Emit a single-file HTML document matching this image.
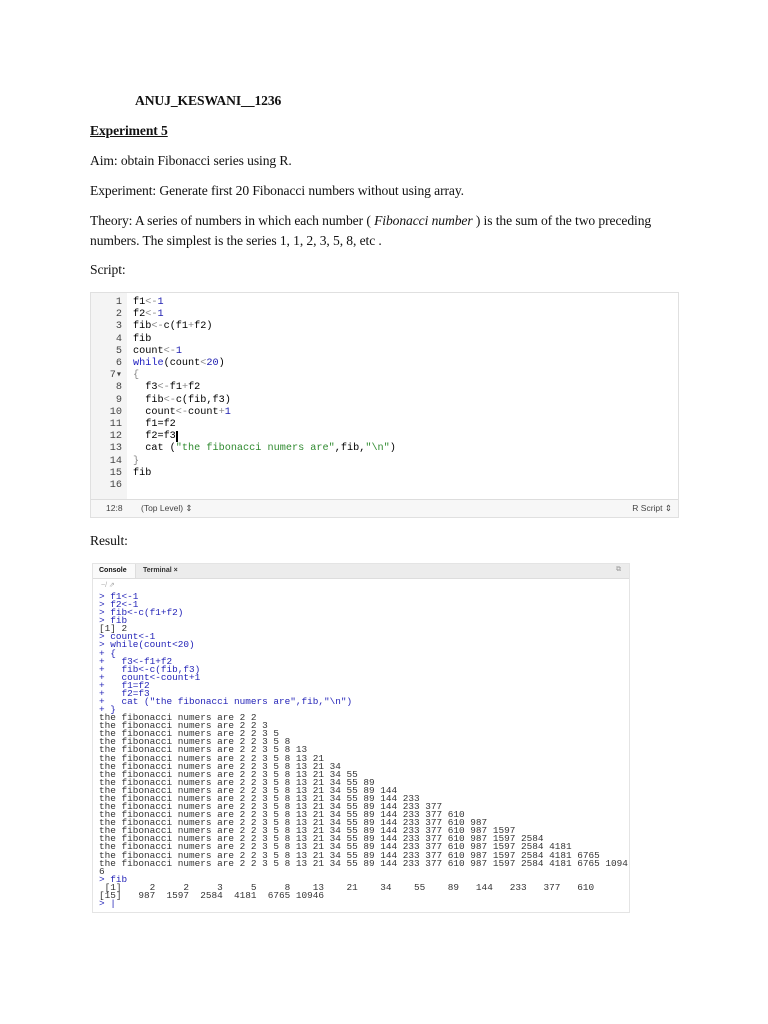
<!DOCTYPE html>
<html><head><meta charset="utf-8"><style>
body{margin:0;background:#fff;width:768px;height:1024px;position:relative;overflow:hidden;font-family:"Liberation Serif",serif;color:#111}
.t{position:absolute;font-size:13.6px;white-space:nowrap;letter-spacing:-0.1px}
.ed{position:absolute;left:90px;top:292px;width:589px;height:226px;background:#fff;border:1px solid #e0e0e0;box-sizing:border-box}
.gut{position:absolute;left:0;top:0;width:36px;height:208px;background:#f4f4f4}
.code{position:absolute;font-family:"Liberation Mono",monospace;font-size:10.2px;line-height:12.2px;white-space:pre}
.ln{left:0;width:31px;text-align:right;color:#444;top:4px}
.src{left:42px;top:4px;color:#000}
.b{color:#2020b0}.g{color:#2f8a2f}.k{color:#2020c0}.p{color:#888}
.sb{position:absolute;left:0;bottom:0;width:100%;height:17px;border-top:1px solid #ddd;background:#f7f7f7;font-family:"Liberation Sans",sans-serif;font-size:8.5px;color:#444}
.con{position:absolute;left:92px;top:563px;width:538px;height:350px;border:1px solid #e4e4e4;box-sizing:border-box;background:#fff}
.tabs{height:14px;background:#ececec;border-bottom:1px solid #ddd;font-family:"Liberation Sans",sans-serif;font-size:7px;position:relative}
.cout{position:absolute;left:6px;top:29px;font-family:"Liberation Mono",monospace;font-size:9.4px;line-height:8.08px;white-space:pre;color:#333}
.i{color:#2424b8}
</style></head><body>
<div class="t" style="left:135px;top:93px;font-weight:bold">ANUJ_KESWANI__1236</div>
<div class="t" style="left:90px;top:123px;font-weight:bold;text-decoration:underline">Experiment 5</div>
<div class="t" style="left:90px;top:153px">Aim: obtain Fibonacci series using R.</div>
<div class="t" style="left:90px;top:183px">Experiment: Generate first 20 Fibonacci numbers without using array.</div>
<div class="t" style="left:90px;top:213px">Theory: A series of numbers in which each number ( <i>Fibonacci number</i> ) is the sum of the two preceding</div>
<div class="t" style="left:90px;top:233px">numbers. The simplest is the series 1, 1, 2, 3, 5, 8, etc .</div>
<div class="t" style="left:90px;top:262px">Script:</div>
<div class="t" style="left:90px;top:533px">Result:</div>

<div class="ed">
<div class="gut"></div>
<div class="code ln">1
2
3
4
5
6
7▾
8
9
10
11
12
13
14
15
16</div>
<div class="code src">f1<span class="p">&lt;-</span><span class="b">1</span>
f2<span class="p">&lt;-</span><span class="b">1</span>
fib<span class="p">&lt;-</span>c(f1<span class="p">+</span>f2)
fib
count<span class="p">&lt;-</span><span class="b">1</span>
<span class="k">while</span>(count<span class="p">&lt;</span><span class="b">20</span>)
<span class="p">{</span>
  f3<span class="p">&lt;-</span>f1<span class="p">+</span>f2
  fib<span class="p">&lt;-</span>c(fib,f3)
  count<span class="p">&lt;-</span>count<span class="p">+</span><span class="b">1</span>
  f1=f2
  f2=f3<span style="border-left:2px solid #000"></span>
  cat (<span class="g">"the fibonacci numers are"</span>,fib,<span class="g">"\n"</span>)
<span class="p">}</span>
fib
</div>
<div class="sb"><span style="position:absolute;left:15px;top:3px">12:8</span><span style="position:absolute;left:50px;top:3px">(Top Level) ⇕</span><span style="position:absolute;right:6px;top:3px">R Script ⇕</span></div>
</div>

<div class="con">
<div class="tabs"><span style="position:absolute;left:0;top:0;height:14px;width:42px;background:#fafafa;border-right:1px solid #ddd"></span><span style="position:absolute;left:6px;top:3px;font-weight:bold">Console</span><span style="position:absolute;left:50px;top:3px;font-weight:bold;color:#333">Terminal ×</span><span style="position:absolute;right:8px;top:2px;color:#999">⧉</span></div>
<div style="position:absolute;left:8px;top:17px;font-size:7px;color:#aaa;font-family:'Liberation Sans',sans-serif">~/ ⇗</div>
<div class="cout"><span class="i">&gt; f1&lt;-1
&gt; f2&lt;-1
&gt; fib&lt;-c(f1+f2)
&gt; fib</span>
[1] 2
<span class="i">&gt; count&lt;-1
&gt; while(count&lt;20)
+ {
+   f3&lt;-f1+f2
+   fib&lt;-c(fib,f3)
+   count&lt;-count+1
+   f1=f2
+   f2=f3
+   cat ("the fibonacci numers are",fib,"\n")
+ }</span>
the fibonacci numers are 2 2
the fibonacci numers are 2 2 3
the fibonacci numers are 2 2 3 5
the fibonacci numers are 2 2 3 5 8
the fibonacci numers are 2 2 3 5 8 13
the fibonacci numers are 2 2 3 5 8 13 21
the fibonacci numers are 2 2 3 5 8 13 21 34
the fibonacci numers are 2 2 3 5 8 13 21 34 55
the fibonacci numers are 2 2 3 5 8 13 21 34 55 89
the fibonacci numers are 2 2 3 5 8 13 21 34 55 89 144
the fibonacci numers are 2 2 3 5 8 13 21 34 55 89 144 233
the fibonacci numers are 2 2 3 5 8 13 21 34 55 89 144 233 377
the fibonacci numers are 2 2 3 5 8 13 21 34 55 89 144 233 377 610
the fibonacci numers are 2 2 3 5 8 13 21 34 55 89 144 233 377 610 987
the fibonacci numers are 2 2 3 5 8 13 21 34 55 89 144 233 377 610 987 1597
the fibonacci numers are 2 2 3 5 8 13 21 34 55 89 144 233 377 610 987 1597 2584
the fibonacci numers are 2 2 3 5 8 13 21 34 55 89 144 233 377 610 987 1597 2584 4181
the fibonacci numers are 2 2 3 5 8 13 21 34 55 89 144 233 377 610 987 1597 2584 4181 6765
the fibonacci numers are 2 2 3 5 8 13 21 34 55 89 144 233 377 610 987 1597 2584 4181 6765 1094
6
<span class="i">&gt; fib</span>
 [1]     2     2     3     5     8    13    21    34    55    89   144   233   377   610
[15]   987  1597  2584  4181  6765 10946
<span class="i">&gt; |</span></div>
</div>
</body></html>
